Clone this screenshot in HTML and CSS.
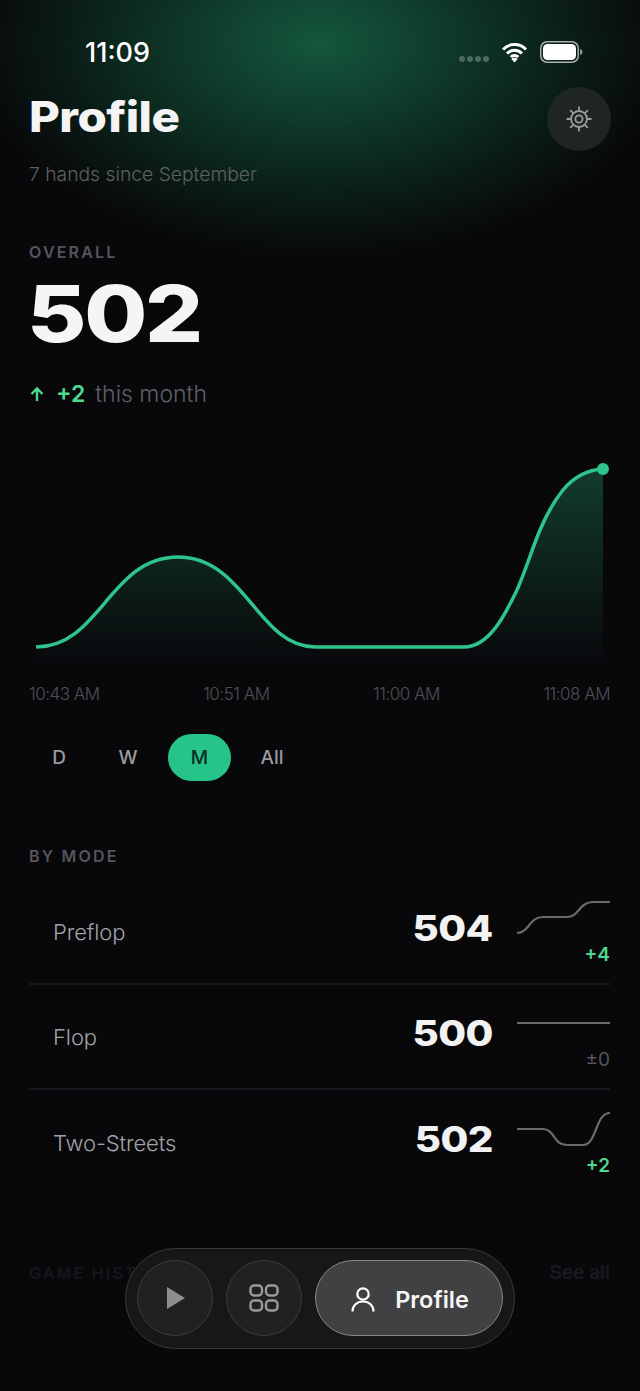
FILE: index.html
```html
<!DOCTYPE html>
<html lang="en">
<head>
<meta charset="utf-8">
<title>Profile</title>
<link rel="stylesheet" href="styles.css">
</head>
<body>
<main class="screen">
  <div class="status">
    <span class="time">11:09</span>
    <div class="status-icons">
      <div class="dots"><i></i><i></i><i></i><i></i></div>
      <svg class="wifi" width="27" height="21" viewBox="0 0 27 21"><path d="M2 7.500a16 16 0 0 1 23 0M6 11.500a10.400 10.400 0 0 1 15 0M9.800 15a5.200 5.200 0 0 1 7.400 0" fill="none" stroke="#fff" stroke-width="3"/><path d="M13.500 20.500 10.300 17a4.500 4.500 0 0 1 6.400 0z" fill="#fff"/></svg>
      <svg class="battery" width="43" height="22" viewBox="0 0 43 22"><rect x=".75" y=".75" width="37.500" height="20.500" rx="6.500" fill="none" stroke="#a9b0ad" stroke-width="1.500"/><rect x="3" y="3" width="33" height="16" rx="4.500" fill="#fff"/><path d="M40 8c1.600.4 2.500 1.500 2.500 3s-.9 2.600-2.500 3z" fill="#8e9693"/></svg>
    </div>
  </div>

  <header class="head">
    <div>
      <h1 class="title">Profile</h1>
      <p class="sub">7 hands since September</p>
    </div>
    <button class="gear" aria-label="Settings">
      <svg width="28" height="28" viewBox="0 0 28 28" fill="none" stroke="#9a9c9c" stroke-width="1.800"><circle cx="14" cy="14" r="8"/><circle cx="14" cy="14" r="3.600"/><path d="M14 1.500v4.500M14 22v4.500M1.500 14h4.500M22 14h4.500M5.200 5.200l2.900 2.900M19.900 19.900l2.900 2.900M22.800 5.200l-2.900 2.900M8.100 19.900l-2.900 2.900"/></svg>
    </button>
  </header>

  <section class="overall">
    <div class="label">OVERALL</div>
    <div class="big"><span>502</span></div>
    <div class="change">
      <svg width="16" height="16" viewBox="0 0 16 16" fill="none" stroke="#4fd88f" stroke-width="2.400"><path d="M8 15V2.500M2.500 8 8 2.500 13.500 8"/></svg>
      <b>+2</b><span>this month</span>
    </div>
  </section>

  <svg class="chart" width="640" height="220" viewBox="0 450 640 220">
    <defs>
      <linearGradient id="fill" x1="0" y1="469" x2="0" y2="665" gradientUnits="userSpaceOnUse">
        <stop offset="0" stop-color="#2bbf87" stop-opacity=".28"/>
        <stop offset="1" stop-color="#2bbf87" stop-opacity="0"/>
      </linearGradient>
    </defs>
    <path d="M36 647C100 647 110 557 178 557C245 557 258 647 315 647L464 647C489 647 505 615 517 590C525 572 532 549 540 530C548 511 555 500 563 490C572 479 585 470 603 469L603 665L36 665Z" fill="url(#fill)"/>
    <path d="M36 647C100 647 110 557 178 557C245 557 258 647 315 647L464 647C489 647 505 615 517 590C525 572 532 549 540 530C548 511 555 500 563 490C572 479 585 470 603 469" fill="none" stroke="#2fc48b" stroke-width="3.500"/>
    <circle cx="603" cy="469" r="6" fill="#2fc48b"/>
  </svg>

  <div class="axis"><span>10:43 AM</span><span>10:51 AM</span><span>11:00 AM</span><span>11:08 AM</span></div>

  <nav class="tabs">
    <span class="tab">D</span><span class="tab">W</span><span class="tab on">M</span><span class="tab">All</span>
  </nav>

  <section class="modes">
    <div class="label">BY MODE</div>
    <div class="row">
      <span class="name">Preflop</span>
      <span class="score"><span>504</span></span>
      <div class="trend">
        <svg width="93" height="36" viewBox="0 0 93 36"><path d="M0 33C12 33 12 17 26 17L50 17C62 17 62 2 76 2L93 2" /></svg>
        <span class="delta up">+4</span>
      </div>
    </div>
    <div class="row">
      <span class="name">Flop</span>
      <span class="score"><span>500</span></span>
      <div class="trend">
        <svg width="93" height="36" viewBox="0 0 93 36"><path d="M0 18L93 18"/></svg>
        <span class="delta">±0</span>
      </div>
    </div>
    <div class="row">
      <span class="name">Two-Streets</span>
      <span class="score"><span>502</span></span>
      <div class="trend">
        <svg width="93" height="36" viewBox="0 0 93 36"><path d="M0 18L26 18C38 18 36 34 50 34L66 34C80 34 78 2 93 2"/></svg>
        <span class="delta up">+2</span>
      </div>
    </div>
  </section>

  <section class="history">
    <span class="label dim">GAME HISTORY</span>
    <span class="see">See all</span>
  </section>

  <nav class="dock">
    <button class="dock-btn" aria-label="Play"><svg class="play" width="20" height="24" viewBox="0 0 20 24"><path d="M1 1 19 12 1 23z" fill="#8d8d8f"/></svg></button>
    <button class="dock-btn" aria-label="Grid"><svg width="30" height="28" viewBox="0 0 30 28" fill="none" stroke="#99999b" stroke-width="2.400"><rect x="1.500" y="1.500" width="11.500" height="10" rx="3.500"/><rect x="17" y="1.500" width="11.500" height="10" rx="3.500"/><rect x="1.500" y="16.500" width="11.500" height="10" rx="3.500"/><rect x="17" y="16.500" width="11.500" height="10" rx="3.500"/></svg></button>
    <button class="dock-pill">
      <svg width="24" height="25" viewBox="0 0 24 25" fill="none" stroke="#fff" stroke-width="2.200"><circle cx="12" cy="7" r="5.700"/><path d="M1.500 24.500c0-6 4.500-10 10.500-10s10.500 4 10.500 10"/></svg>
      <span>Profile</span>
    </button>
  </nav>
</main>
</body>
</html>
```
FILE: styles.css
```css
* { box-sizing: border-box; }
html, body { margin: 0; padding: 0; background: #08080b; }
.screen {
  position: relative;
  width: 640px;
  height: 1391px;
  overflow: hidden;
  font-family: "Inter", "Liberation Sans", sans-serif;
  color: #f5f5f5;
  background:
    radial-gradient(ellipse 350px 215px at 320px 42px, #14573c 0%, #124a35 16%, #0f3a2a 36%, #0c2a1f 56%, #0a1b16 74%, #09110f 88%, rgba(8, 8, 11, 0) 100%),
    #08080b;
}
.status {
  display: flex;
  justify-content: space-between;
  align-items: center;
  height: 44px;
  margin-top: 30px;
  padding: 0 57px 0 85px;
}
.time {
  font-size: 27px;
  font-weight: 500;
  color: #fff;
}
.status-icons { display: flex; align-items: center; gap: 12px; }
.dots { display: flex; gap: 2px; margin-top: 14px; }
.dots i { width: 6px; height: 6px; border-radius: 50%; background: #4b6b5e; }
.head {
  display: flex;
  justify-content: space-between;
  align-items: flex-start;
  padding: 13px 29px 0;
}
.title {
  margin: 5px 0 0;
  font-size: 42px;
  font-weight: 800;
  line-height: 50px;
  letter-spacing: -.5px;
  color: #f4f4f4;
  transform: scaleX(1.13);
  transform-origin: left;
}
.sub {
  margin: 20px 0 0;
  font-size: 19.300px;
  font-weight: 300;
  line-height: 24px;
  color: #5d6161;
}
.gear {
  display: flex;
  align-items: center;
  justify-content: center;
  width: 64px;
  height: 64px;
  padding: 0;
  border: 0;
  border-radius: 50%;
  background: #1f2523;
}
.overall { padding: 56px 29px 0; }
.label {
  font-size: 16px;
  font-weight: 600;
  line-height: 20px;
  letter-spacing: 2.200px;
  color: #55565b;
}
.big {
  height: 72px;
  margin-top: 16px;
  font-size: 78px;
  font-weight: 800;
  line-height: 72px;
  letter-spacing: -2px;
  color: #f5f5f5;
}
.big span { display: inline-block; transform: scaleX(1.17); transform-origin: left; margin-left: -2px; }
.score span { display: inline-block; transform: scaleX(1.15); transform-origin: right; }
.change {
  display: flex;
  align-items: center;
  height: 30px;
  margin-top: 29px;
  font-size: 23px;
}
.change b { margin-left: 11px; font-weight: 600; color: #4fd88f; }
.change span { margin-left: 10px; font-weight: 300; color: #5f6066; }
.chart { display: block; margin-top: 41px; }
.axis {
  display: flex;
  justify-content: space-between;
  padding: 0 30px 0 29px;
  margin-top: 12px;
  font-size: 17px;
  font-weight: 300;
  line-height: 24px;
  letter-spacing: -.5px;
  color: #4f5055;
}
.tabs { display: flex; padding: 0 29px 0 30px; margin-top: 28px; }
.tab {
  display: flex;
  align-items: center;
  justify-content: center;
  min-width: 58px;
  height: 47px;
  margin-right: 11px;
  border-radius: 24px;
  font-size: 19px;
  font-weight: 500;
  color: #9a9a9f;
}
.tab.on { width: 63px; background: #27c489; color: #0a2b1f; }
.tab:last-child { min-width: 60px; }
.modes { padding: 65px 30px 0 29px; }
.row {
  display: flex;
  align-items: center;
  height: 105px;
  padding-left: 24px;
  border-bottom: 2px solid #17181b;
}
.row:last-child { border-bottom: 0; }
.label + .row { margin-top: 14px; }
.name { flex: 1; font-size: 22px; font-weight: 300; color: #a2a2a6; letter-spacing: -.1px; }
.score {
  width: 90px;
  margin-top: -8px;
  margin-right: 24px;
  font-size: 35px;
  font-weight: 800;
  letter-spacing: -.5px;
  text-align: right;
  color: #f2f2f2;
}
.trend { display: flex; flex-direction: column; align-items: flex-end; width: 93px; margin-top: 3px; }
.trend svg { display: block; }
.trend path { fill: none; stroke: #6b6b6d; stroke-width: 2.200; }
.delta { margin-top: 7px; font-size: 19px; font-weight: 400; line-height: 24px; color: #55565b; }
.delta.up { font-weight: 600; color: #4fd88f; }
.history {
  display: flex;
  justify-content: space-between;
  align-items: center;
  padding: 66px 30px 0 29px;
}
.label.dim { color: #16161a; }
.see { font-size: 19px; font-weight: 600; color: #1a1a1e; }
.dock {
  position: absolute;
  left: 125px;
  top: 1248px;
  display: flex;
  gap: 13px;
  width: 390px;
  height: 101px;
  padding: 11px;
  border: 1.500px solid #39393b;
  border-radius: 51px;
  background: #17171a;
}
.dock-btn, .dock-pill {
  display: flex;
  align-items: center;
  justify-content: center;
  height: 76px;
  padding: 0;
  border-radius: 38px;
}
.dock-btn { width: 76px; border: 1.500px solid #3c3c3e; background: #212123; }
.play { margin-left: 2px; }
.dock-pill {
  flex: 1;
  gap: 20px;
  padding: 2px 0 0 2px;
  border: 1.500px solid #88888a;
  background: #414143;
  font-family: inherit;
  font-size: 23.500px;
  font-weight: 600;
  color: #f5f5f5;
}
```
